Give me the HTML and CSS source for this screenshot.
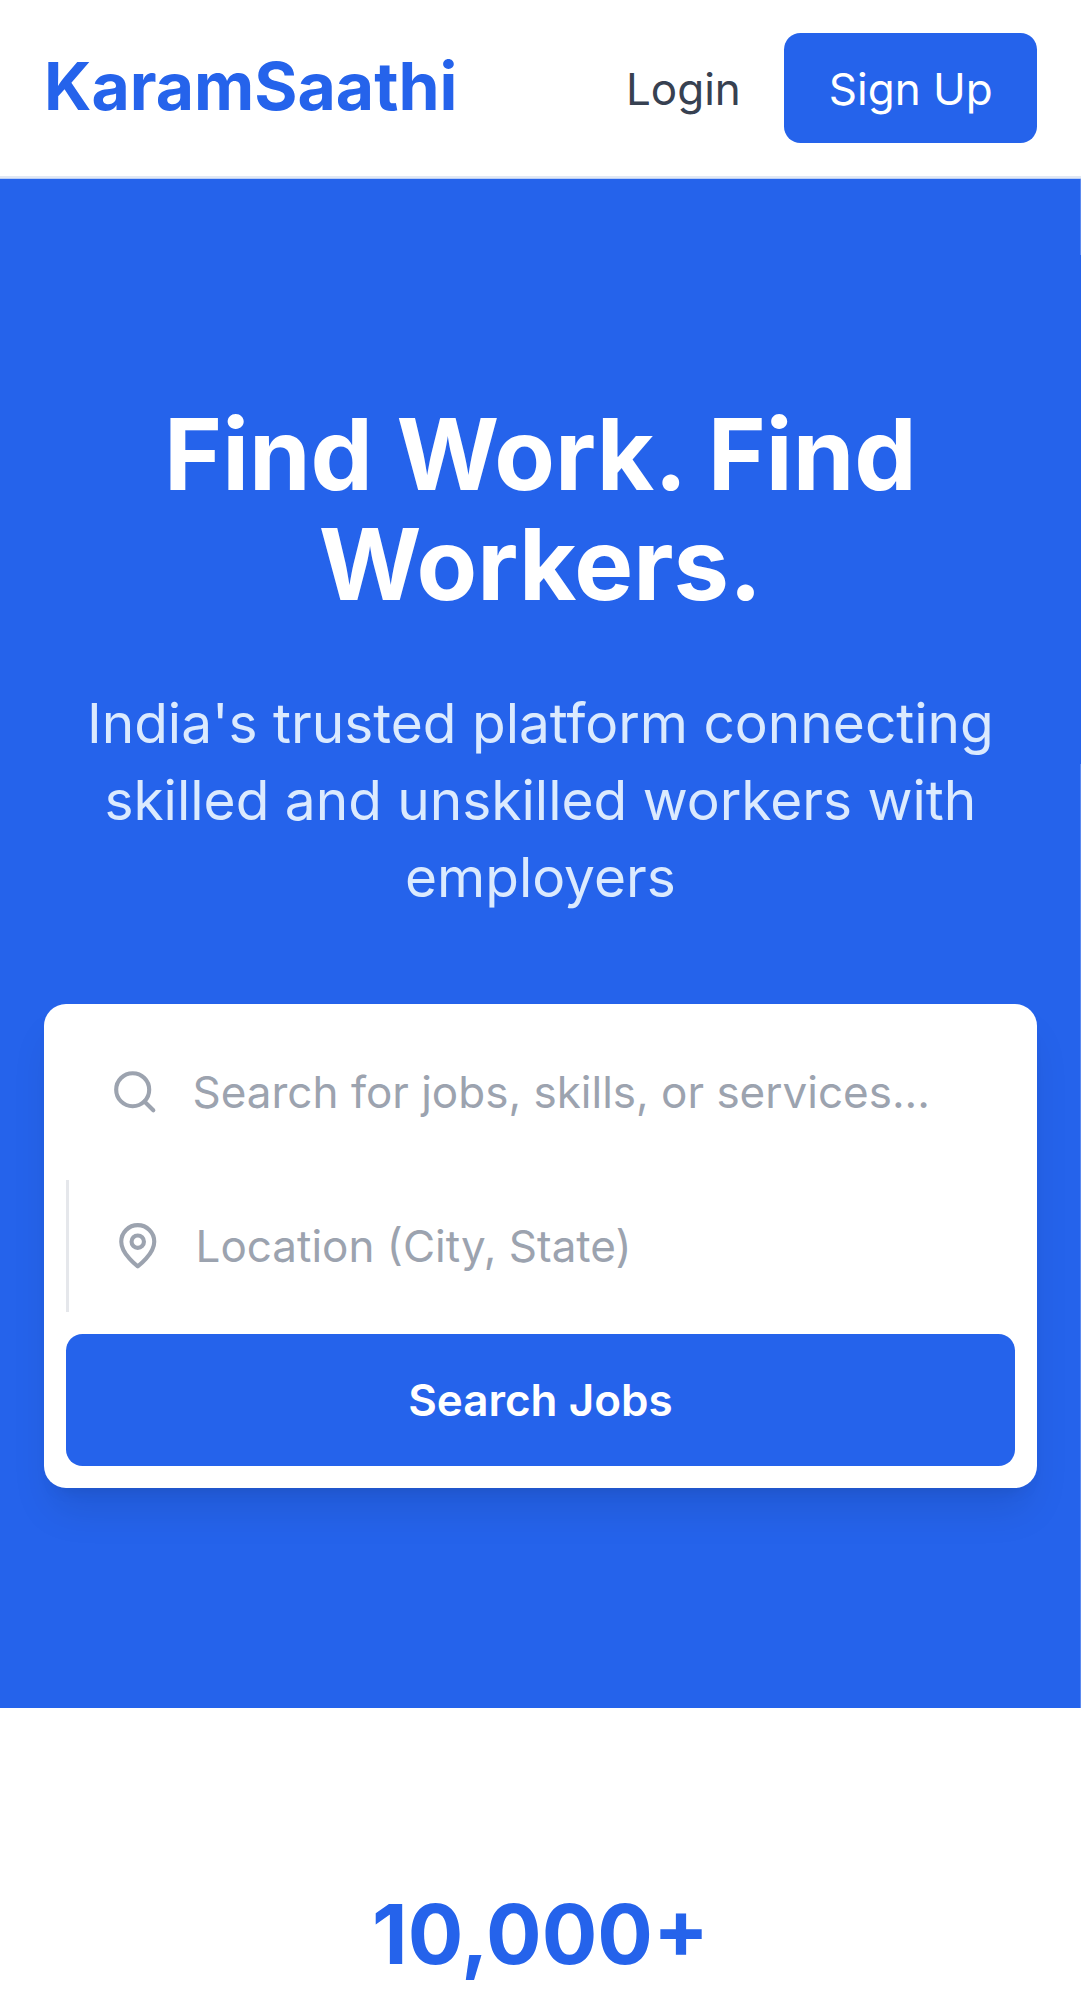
FILE: index.html
```html
<!DOCTYPE html>
<html lang="en">
<head>
<meta charset="utf-8">
<title>KaramSaathi</title>
<link rel="stylesheet" href="styles.css">
</head>
<body>
<header class="header">
  <a class="logo">KaramSaathi</a>
  <nav class="nav">
    <a class="login">Login</a>
    <a class="signup">Sign Up</a>
  </nav>
</header>
<main>
  <section class="hero">
    <h1 class="title">Find Work. Find Workers.</h1>
    <p class="lead">India's trusted platform connecting skilled and unskilled workers with employers</p>
    <form class="search">
      <label class="field">
        <svg class="icon" viewBox="0 0 24 24"><circle cx="11" cy="11" r="8"/><path d="m21 21-4.3-4.3"/></svg>
        <input class="input" type="text" placeholder="Search for jobs, skills, or services...">
      </label>
      <label class="field field-location">
        <svg class="icon" viewBox="0 0 24 24"><path d="M20 10c0 6-8 12-8 12s-8-6-8-12a8 8 0 0 1 16 0Z"/><circle cx="12" cy="10" r="3"/></svg>
        <input class="input" type="text" placeholder="Location (City, State)">
      </label>
      <button class="submit" type="button">Search Jobs</button>
    </form>
  </section>
  <section class="stats">
    <div class="stat">10,000+</div>
  </section>
</main>
</body>
</html>
```
FILE: styles.css
```css
:root {
  --u: 2.75px;
  --blue: #2563eb;
}
*, *::before, *::after { box-sizing: border-box; }
body {
  margin: 0;
  background: #fff;
  font: 400 calc(16 * var(--u)) / calc(24 * var(--u)) Inter, sans-serif;
}
h1, p { margin: 0; }
.header {
  display: flex;
  align-items: center;
  justify-content: space-between;
  height: 178px;
  padding: 0 44.25px 0 44px;
  border-bottom: 2px solid #e1e8f4;
  background: #fff;
}
.logo {
  padding-bottom: 4px;
  color: var(--blue);
  font-size: calc(24 * var(--u));
  line-height: calc(32 * var(--u));
  font-weight: 700;
}
.nav { display: flex; align-items: center; gap: 43.25px; }
.login { padding-top: 2px; color: #374151; }
.signup {
  padding: 23px 44px 21px 44.75px;
  border-radius: calc(6 * var(--u));
  background: var(--blue);
  color: #fff;
}
.hero {
  padding: 219.75px 44.25px 220px 44px;
  border-top: 1px solid #b9cdf5;
  /* hairline along the right edge, above and below the heading block */
  background:
    linear-gradient(rgb(255 255 255 / 0.25) 0 0) right 0 top 0 / 1px 76px no-repeat,
    linear-gradient(rgb(255 255 255 / 0.25) 0 0) right 0 bottom 0 / 1px 944px no-repeat,
    var(--blue);
  text-align: center;
}
.title {
  margin-bottom: calc(24 * var(--u));
  color: #fff;
  font-size: calc(36 * var(--u));
  line-height: calc(40 * var(--u));
  font-weight: 700;
}
.lead {
  margin-bottom: calc(32 * var(--u));
  color: #dbeafe;
  font-size: calc(20 * var(--u));
  line-height: calc(28 * var(--u));
}
.search {
  display: flex;
  flex-direction: column;
  gap: calc(8 * var(--u));
  padding: calc(8 * var(--u));
  border-radius: calc(8 * var(--u));
  background: #fff;
  box-shadow: 0 calc(10 * var(--u)) calc(15 * var(--u)) calc(-3 * var(--u)) rgb(0 0 0 / 0.1),
    0 calc(4 * var(--u)) calc(6 * var(--u)) calc(-4 * var(--u)) rgb(0 0 0 / 0.1);
}
.field {
  display: flex;
  align-items: center;
  gap: calc(12 * var(--u));
  height: calc(48 * var(--u));
  padding: 0 calc(16 * var(--u));
}
.field-location { border-left: 3px solid #e5e7eb; }
.icon {
  flex: none;
  width: calc(18 * var(--u));
  height: calc(18 * var(--u));
  fill: none;
  stroke: #9ca3af;
  stroke-width: 2;
  stroke-linecap: round;
  stroke-linejoin: round;
}
.input {
  flex: 1;
  min-width: 0;
  padding: 0;
  border: 0;
  outline: 0;
  background: none;
  color: #111827;
  font: inherit;
}
.input::placeholder { color: #9ca3af; opacity: 1; }
.submit {
  height: calc(48 * var(--u));
  padding: 0;
  border: 0;
  border-radius: calc(6 * var(--u));
  background: var(--blue);
  color: #fff;
  font: inherit;
  font-weight: 600;
}
.stats { padding: 177px calc(16 * var(--u)) 0; text-align: center; }
.stat {
  color: var(--blue);
  font-size: calc(30 * var(--u));
  line-height: calc(36 * var(--u));
  font-weight: 700;
}
```
